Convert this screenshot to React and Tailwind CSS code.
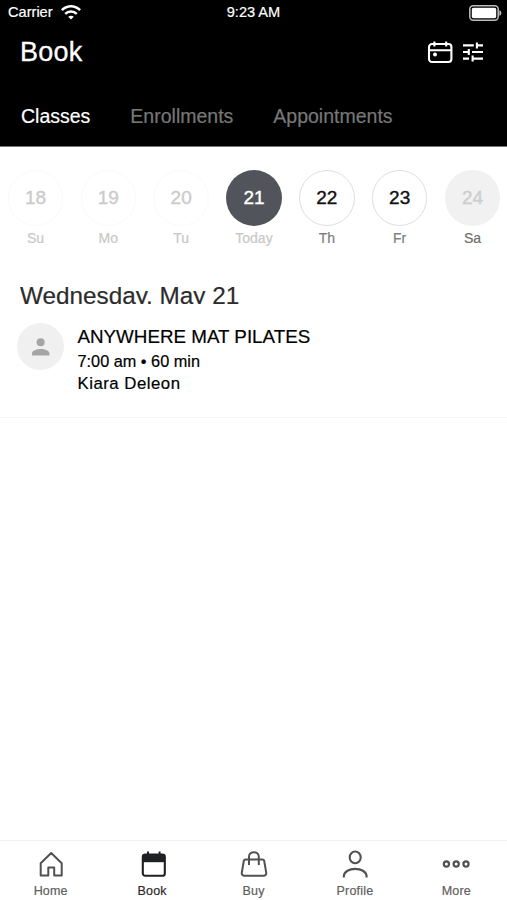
import { useState } from 'react'

const DAYS = [
  { date: 18, label: 'Su', state: 'past' },
  { date: 19, label: 'Mo', state: 'past' },
  { date: 20, label: 'Tu', state: 'past' },
  { date: 21, label: 'Today', state: 'selected' },
  { date: 22, label: 'Th', state: 'open' },
  { date: 23, label: 'Fr', state: 'open' },
  { date: 24, label: 'Sa', state: 'empty' },
]

const circleStyles = {
  past: 'border border-[#fafafa] text-[#cbcbcb]',
  selected: 'bg-[#51545b] text-white',
  open: 'border border-[#dedede] text-[#111]',
  empty: 'bg-[#f1f1f1] text-[#cdcdcd]',
}

const labelStyles = {
  past: 'text-[#c8c8c8]',
  selected: 'text-[#c8c8c8]',
  open: 'text-[#7d7d7d]',
  empty: 'text-[#6e6e6e]',
}

const WifiIcon = () => (
  <svg width="20" height="15" viewBox="0 0 20 15" fill="none" stroke="white" strokeWidth="2.5">
    <path d="M0.9 5.2C6 -0.1 14 -0.1 19.1 5.2" />
    <path d="M4.2 8.8C7.4 5.8 12.6 5.8 15.8 8.8" />
    <path d="M10 14.4L7.2 11.8C8.8 10.5 11.2 10.5 12.8 11.8Z" fill="white" stroke="none" />
  </svg>
)

const BatteryIcon = () => (
  <svg width="33" height="16" viewBox="0 0 33 16" fill="none">
    <rect x="0.8" y="0.8" width="28.4" height="14.4" rx="3.4" stroke="#bdbdbd" strokeWidth="1.5" />
    <rect x="2.8" y="2.8" width="24.4" height="10.4" rx="1.6" fill="white" />
    <path d="M30.4 5.2C33 6 33 10 30.4 10.8Z" fill="#bdbdbd" />
  </svg>
)

const CalendarIcon = () => (
  <svg width="26" height="24" viewBox="0 0 26 24" fill="none" stroke="white" strokeWidth="2.1">
    <rect x="2" y="4" width="22.4" height="18" rx="3" />
    <path d="M2 10.2H24.4M7.4 1.4V6.4M19.2 1.4V6.4" />
    <circle cx="8" cy="14.6" r="2" fill="white" stroke="none" />
  </svg>
)

const FilterIcon = () => (
  <svg width="20" height="20" viewBox="0 0 20 20" fill="none" stroke="white" strokeWidth="2.1">
    <path d="M0 3.4H10.8M13.9 3.4H20M13.9 0.4V6.4" />
    <path d="M0 10H6M9 10H20M5.8 7V13" />
    <path d="M0 16.6H6M9.6 16.6H20M9.6 13.6V19.6" />
  </svg>
)

const HomeIcon = () => (
  <svg width="28" height="28" viewBox="0 0 28 28" fill="none" stroke="#505153" strokeWidth="2" strokeLinejoin="round">
    <path d="M3.7 13.3L14.2 3L24.7 13.3V25.6H17.2V17.6H11.3V25.6H3.7Z" />
  </svg>
)

const BookIcon = () => (
  <svg width="28" height="28" viewBox="0 0 28 28" fill="none">
    <rect x="4.8" y="4.6" width="22" height="21.2" rx="2.4" stroke="#1f2024" strokeWidth="2.1" />
    <path d="M4.4 4.6H27.2V12.2H4.4Z" fill="#1f2024" />
    <path d="M10 1.6V5M21.6 1.6V5" stroke="#1f2024" strokeWidth="2" />
  </svg>
)

const BagIcon = () => (
  <svg width="28" height="28" viewBox="0 0 28 28" fill="none" stroke="#505153" strokeWidth="2" strokeLinejoin="round">
    <path d="M5.6 9.4H22.4C23.4 9.4 24 9.9 24.2 10.8L26.2 22.6C26.5 24.6 25.4 25.8 23.6 25.8H4.4C2.6 25.8 1.5 24.6 1.8 22.6L3.8 10.8C4 9.9 4.6 9.4 5.6 9.4Z" />
    <path d="M9 15V6.8C9 0.6 18.8 0.6 18.8 6.8V15" />
  </svg>
)

const ProfileIcon = () => (
  <svg width="28" height="28" viewBox="0 0 28 28" fill="none" stroke="#505153" strokeWidth="2.1">
    <ellipse cx="14.2" cy="7.4" rx="5.5" ry="5.9" />
    <path d="M2.8 27.4V26.4C3.2 16.4 25.2 16.4 25.6 26.4V27.4" />
  </svg>
)

const MoreIcon = () => (
  <svg width="28" height="28" viewBox="0 0 28 28" fill="none" stroke="#505153" strokeWidth="2.2">
    <circle cx="4.4" cy="14" r="2.6" />
    <circle cx="14.2" cy="14" r="2.6" />
    <circle cx="24" cy="14" r="2.6" />
  </svg>
)

const NAV_ITEMS = [
  { name: 'Home', icon: HomeIcon },
  { name: 'Book', icon: BookIcon },
  { name: 'Buy', icon: BagIcon },
  { name: 'Profile', icon: ProfileIcon },
  { name: 'More', icon: MoreIcon },
]

const StatusBar = () => (
  <div className="grid h-[25px] grid-cols-3 items-center pl-2 pr-[5px] text-[14.6px] [-webkit-text-stroke:0.2px]">
    <div className="flex items-center gap-2">
      <span>Carrier</span>
      <WifiIcon />
    </div>
    <span className="-ml-[3px] text-center">9:23 AM</span>
    <div className="flex justify-end">
      <BatteryIcon />
    </div>
  </div>
)

const ClassRow = ({ title, time, duration, instructor }) => (
  <div className="flex h-[114px] border-b border-[#f7f7f7] pl-[17px] pt-[19px]">
    <div className="flex h-[47px] w-[47px] items-center justify-center rounded-full bg-[#f0f0f0]">
      <svg width="18" height="18" viewBox="0 0 18 18" fill="#a5a5a5">
        <circle cx="8.6" cy="4.2" r="4" />
        <path d="M0 17.4V15.4C0 9.4 17.4 9.4 17.4 15.4V17.4Z" />
      </svg>
    </div>
    <div className="ml-[13.5px] pt-0.5 text-black [-webkit-text-stroke:0.2px]">
      <p className="text-[18.8px] leading-6">{title}</p>
      <p className="text-[16.3px] leading-6">{time} • {duration}</p>
      <p className="text-[16.8px] leading-[21px] tracking-[0.5px]">{instructor}</p>
    </div>
  </div>
)

const App = () => {
  const [tab, setTab] = useState('Classes')
  const [page, setPage] = useState('Book')

  return (
    <div className="flex h-[900px] w-[507px] flex-col overflow-hidden bg-white font-['Liberation_Sans',Arial,sans-serif]">
      {/* Header */}
      <header className="h-[147px] border-b border-[#777] bg-black text-white">
        <StatusBar />
        <div className="flex h-[54px] items-center justify-between pl-5 pr-6">
          <h1 className="text-[27px] leading-none tracking-[0.2px] [-webkit-text-stroke:0.3px]">Book</h1>
          <div className="flex items-center gap-[10px]">
            <CalendarIcon />
            <FilterIcon />
          </div>
        </div>
        <div className="flex h-[67px] items-center gap-10 pl-[21px] pt-2 text-[19.5px] [-webkit-text-stroke:0.2px]">
          {['Classes', 'Enrollments', 'Appointments'].map((name) => (
            <button
              key={name}
              onClick={() => setTab(name)}
              className={tab === name ? 'text-white' : 'text-[#777]'}
            >
              {name}
            </button>
          ))}
        </div>
      </header>

      {/* Week strip */}
      <div className="flex justify-between pl-2 pr-[7px] pt-[23px]">
        {DAYS.map((day) => (
          <div key={day.date} className="flex w-[55px] flex-col items-center">
            <div className={`flex h-[55.5px] w-[55.5px] items-center justify-center rounded-full pt-px text-[19px] [-webkit-text-stroke:0.4px] ${circleStyles[day.state]}`}>
              {day.date}
            </div>
            <span className={`mt-[2.5px] text-sm leading-5 [-webkit-text-stroke:0.2px] ${labelStyles[day.state]}`}>{day.label}</span>
          </div>
        ))}
      </div>

      {/* Schedule */}
      <main className="flex-1 pt-[35px]">
        <h2 className="ml-5 h-[21px] overflow-hidden text-[24.3px] leading-[26px] text-[#2c2c2c] [-webkit-text-stroke:0.2px]">Wednesday, May 21</h2>
        <ClassRow title="ANYWHERE MAT PILATES" time="7:00 am" duration="60 min" instructor="Kiara Deleon" />
      </main>

      {/* Bottom navigation */}
      <nav className="flex h-[60px] border-t border-[#f0f0f0] bg-white">
        {NAV_ITEMS.map(({ name, icon: Icon }) => (
          <button
            key={name}
            onClick={() => setPage(name)}
            className={`flex flex-1 flex-col items-center pt-[9px] text-[12.5px] tracking-[0.2px] [-webkit-text-stroke:0.2px] ${page === name ? 'text-[#2b2b2b]' : 'text-[#606060]'}`}
          >
            <Icon />
            <span className="mt-[5px] leading-4">{name}</span>
          </button>
        ))}
      </nav>
    </div>
  )
}

export default App
